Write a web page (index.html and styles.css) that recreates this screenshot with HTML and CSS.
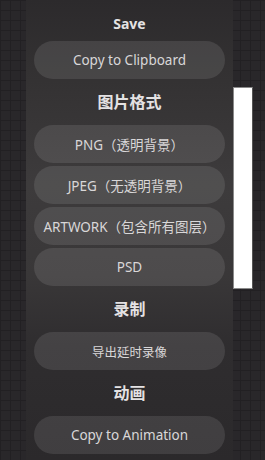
FILE: index.html
```html
<!DOCTYPE html>
<html lang="zh-CN">
<head>
  <meta charset="UTF-8">
  <meta name="viewport" content="width=device-width, initial-scale=1.0">
  <title>Save</title>
  <link rel="stylesheet" href="styles.css">
</head>
<body>
  <div class="panel">
    <h2 class="title">Save</h2>
    <button class="btn">Copy to Clipboard</button>

    <h2 class="heading">图片格式</h2>
    <div class="group">
      <button class="btn">PNG（透明背景）</button>
      <button class="btn">JPEG（无透明背景）</button>
      <button class="btn">ARTWORK（包含所有图层）</button>
      <button class="btn">PSD</button>
    </div>

    <h2 class="heading">录制</h2>
    <button class="btn btn-small">导出延时录像</button>

    <h2 class="heading">动画</h2>
    <button class="btn">Copy to Animation</button>
  </div>

  <div class="scroll-bar"></div>
</body>
</html>
```

FILE: styles.css
```css
body {
  margin: 0;
  height: 460px;
  overflow: hidden;
  font-family: "Noto Sans", "Noto Sans CJK SC", sans-serif;
  background-color: #29272a;
  background-image:
    linear-gradient(to right, #222023 1px, transparent 1px),
    linear-gradient(to bottom, #222023 1px, transparent 1px);
  background-size: 10px 10px;
  color: #e4e2e3;
}

.panel {
  margin-left: 26px;
  width: 191px;
  height: 460px;
  padding: 0 8px;
  background: linear-gradient(to bottom, #2c2a2c 0%, #333132 15%, #3d3b3c 40%, #393738 60%, #2f2d2f 75%, #2b292b 100%);
  display: flex;
  flex-direction: column;
}

.title,
.heading {
  margin: 0;
  text-align: center;
  font-weight: bold;
  line-height: 20px;
}

.title {
  font-size: 14px;
  margin-top: 14px;
  margin-bottom: 7px;
}

.heading {
  font-size: 16px;
  margin-top: 13px;
  margin-bottom: 13px;
}

.group {
  display: flex;
  flex-direction: column;
  gap: 3px;
}

.btn {
  height: 38px;
  width: 100%;
  border: none;
  border-radius: 19px;
  background-color: rgba(255, 255, 255, 0.1);
  color: #d9d7d8;
  font-family: "Noto Sans", "Noto Sans CJK SC", sans-serif;
  font-size: 13.5px;
  padding: 0;
  cursor: pointer;
}

.btn-small {
  font-size: 12.5px;
}

.scroll-bar {
  position: absolute;
  left: 233px;
  top: 87px;
  width: 18px;
  height: 200px;
  background-color: #fff;
  border: 1px solid #8a8a8a;
  border-right-color: #555;
}
```
